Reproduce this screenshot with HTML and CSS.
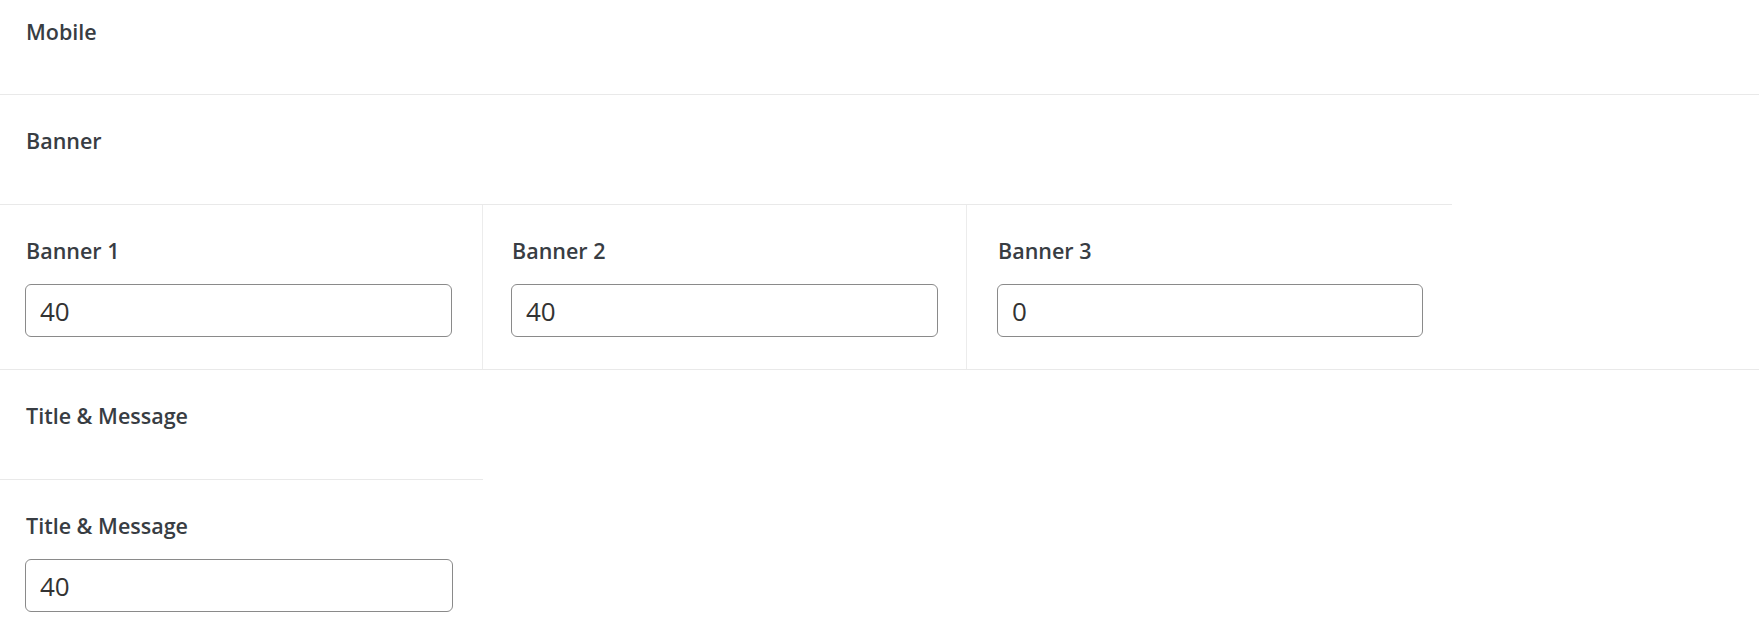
FILE: index.html
```html
<!DOCTYPE html>
<html lang="en">
<head>
<meta charset="utf-8">
<title>Settings</title>
<link rel="stylesheet" href="styles.css">
</head>
<body>
  <div class="section section--top">
    <div class="head head--top">Mobile</div>
  </div>

  <div class="section">
    <div class="group">
      <div class="head">Banner</div>
      <div class="fields">
        <div class="field field--c1">
          <label class="label" for="b1">Banner 1</label>
          <input class="input" id="b1" type="text" value="40">
        </div>
        <div class="field field--c2">
          <label class="label" for="b2">Banner 2</label>
          <input class="input" id="b2" type="text" value="40">
        </div>
        <div class="field field--c3">
          <label class="label" for="b3">Banner 3</label>
          <input class="input" id="b3" type="text" value="0">
        </div>
      </div>
    </div>
  </div>

  <div class="section section--last">
    <div class="group">
      <div class="head">Title &amp; Message</div>
      <div class="fields">
        <div class="field field--c1 field--single">
          <label class="label" for="tm">Title &amp; Message</label>
          <input class="input" id="tm" type="text" value="40">
        </div>
      </div>
    </div>
  </div>
</body>
</html>
```

FILE: styles.css
```css
html, body {
  margin: 0;
  padding: 0;
  background: #ffffff;
}

body {
  font-family: "Open Sans", "Noto Sans", "Liberation Sans", sans-serif;
  color: #383d43;
  width: 1759px;
  height: 633px;
  overflow: hidden;
}

.section {
  border-bottom: 1px solid #e9e9e9;
}

.section--last {
  border-bottom: none;
}

.group {
  display: inline-flex;
  flex-direction: column;
  vertical-align: top;
}

.head {
  font-size: 21.5px;
  font-weight: 600;
  line-height: 32px;
  padding: 30px 26px 47px 26px;
  border-bottom: 1px solid #e9e9e9;
  white-space: nowrap;
}

.head--top {
  padding-top: 16px;
  padding-bottom: 46px;
  border-bottom: none;
}

.fields {
  display: flex;
}

.field {
  display: flex;
  flex-direction: column;
  padding-top: 30px;
  padding-bottom: 32px;
  box-sizing: border-box;
}

.field--c1 {
  width: 483px;
  padding-left: 25px;
  padding-right: 30px;
  border-right: 1px solid #ececec;
}

.field--c2 {
  width: 484px;
  padding-left: 28px;
  padding-right: 28px;
  border-right: 1px solid #ececec;
}

.field--c3 {
  width: 485px;
  padding-left: 30px;
  padding-right: 29px;
}

.field--single {
  border-right: none;
}

.label {
  font-size: 21.5px;
  font-weight: 600;
  line-height: 32px;
  margin-bottom: 17px;
  padding-left: 1px;
  white-space: nowrap;
}

.input {
  box-sizing: border-box;
  width: 100%;
  height: 53px;
  margin: 0;
  padding: 0 14px;
  border: 1px solid #8a8a8a;
  border-radius: 6px;
  background: #ffffff;
  font-family: "Open Sans", "Noto Sans", "Liberation Sans", sans-serif;
  font-size: 26px;
  font-weight: 400;
  color: #333333;
  outline: none;
}
```
